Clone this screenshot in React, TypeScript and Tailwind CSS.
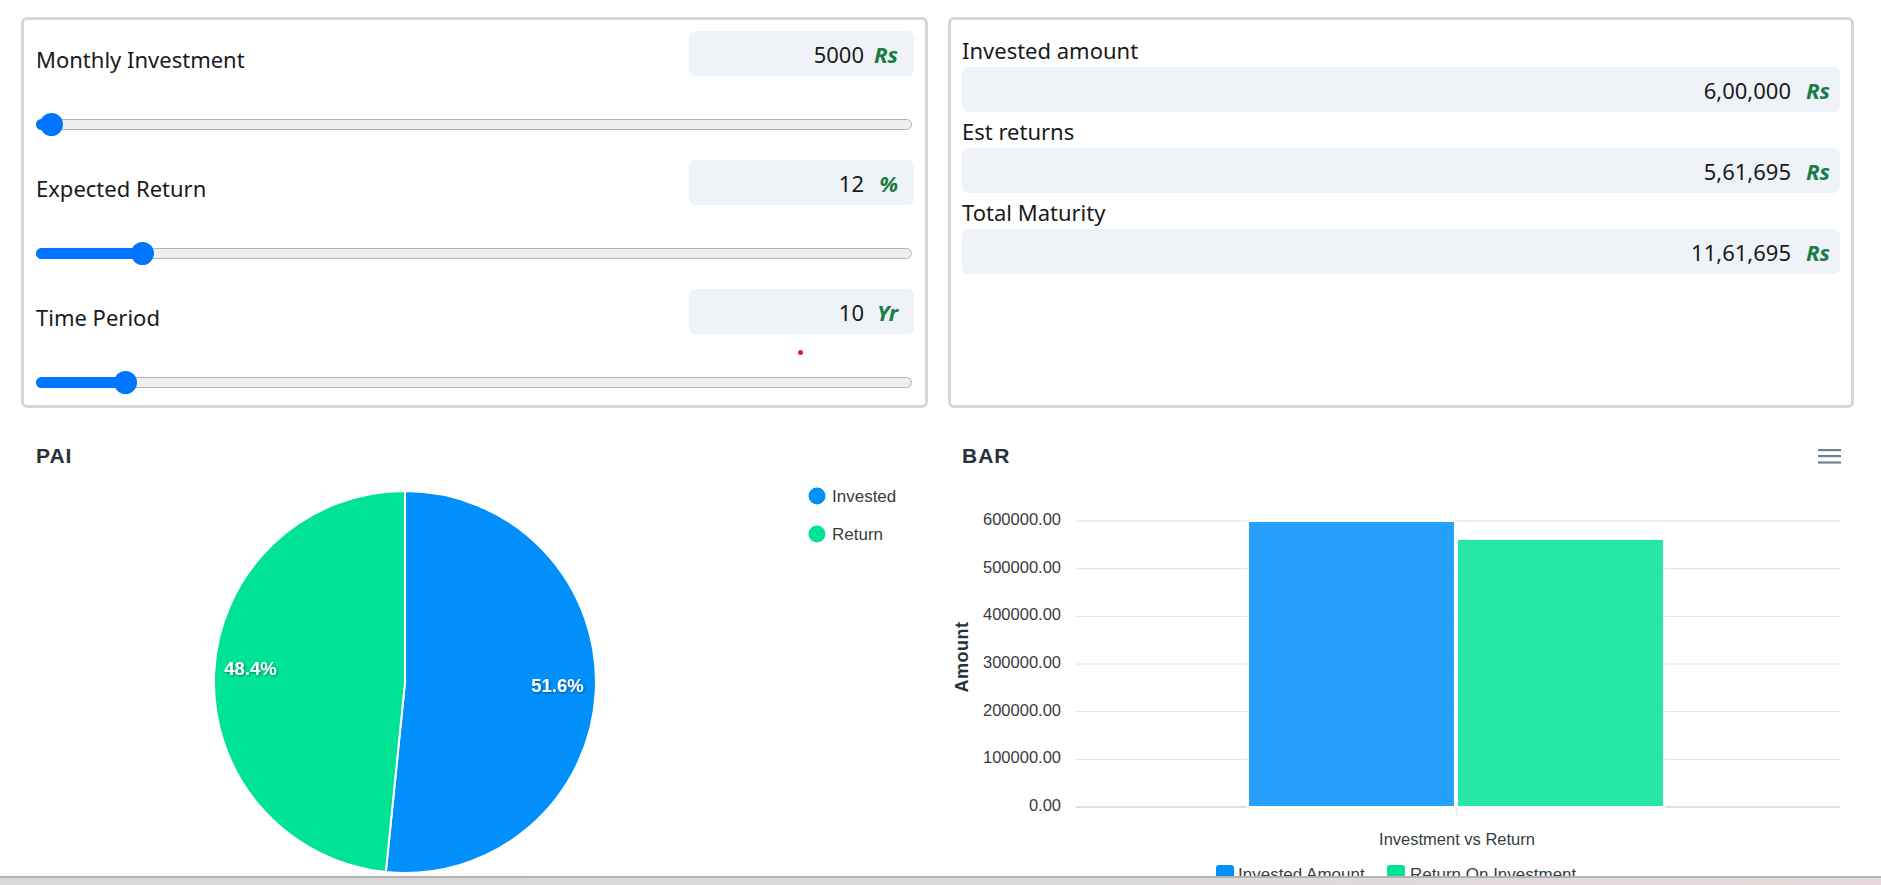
import React from 'react';

const inputs = [
  { label: 'Monthly Investment', value: '5000', unit: 'Rs', fill: 'w-[15px]', thumb: 'left-[4px]' },
  { label: 'Expected Return', value: '12', unit: '%', fill: 'w-[106px]', thumb: 'left-[95px]' },
  { label: 'Time Period', value: '10', unit: 'Yr', fill: 'w-[89px]', thumb: 'left-[78px]' },
];

const results = [
  { label: 'Invested amount', value: '6,00,000' },
  { label: 'Est returns', value: '5,61,695' },
  { label: 'Total Maturity', value: '11,61,695' },
];

const yTicks = ['600000.00', '500000.00', '400000.00', '300000.00', '200000.00', '100000.00', '0.00'];

const Slider = ({ fill, thumb }: { fill: string; thumb: string }) => (
  <div className="relative mt-[37px] h-[22px] w-[876px]">
    <div className="absolute inset-x-0 top-[6px] h-[11px] rounded-full border border-[#b2b2b2] bg-[#efefef]" />
    <div className={`absolute left-0 top-[6px] h-[11px] rounded-l-full bg-[#0075ff] ${fill}`} />
    <div className={`absolute top-0 size-[23px] rounded-full bg-[#0075ff] ${thumb}`} />
  </div>
);

const PieChart = () => {
  // center / radius in svg coords
  const cx = 384;
  const cy = 214;
  const r = 191;
  const ex = 364.83;
  const ey = 404.04;
  return (
    <svg width="907" height="417" className="block" style={{ fontFamily: '"Liberation Sans", Arial, sans-serif' }}>
      <defs>
        <filter id="lblShadow" x="-20%" y="-20%" width="140%" height="140%">
          <feDropShadow dx="1" dy="1" stdDeviation="1" floodColor="#000" floodOpacity="0.45" />
        </filter>
      </defs>
      <path d={`M${cx} ${cy} L${cx} ${cy - r} A${r} ${r} 0 1 1 ${ex} ${ey} Z`} fill="#008ffb" stroke="#fff" strokeWidth="2" />
      <path d={`M${cx} ${cy} L${ex} ${ey} A${r} ${r} 0 0 1 ${cx} ${cy - r} Z`} fill="#00e396" stroke="#fff" strokeWidth="2" />
      <text x="536.5" y="224" textAnchor="middle" fontSize="18.5" fontWeight="bold" fill="#fff" filter="url(#lblShadow)">51.6%</text>
      <text x="229.5" y="207" textAnchor="middle" fontSize="18.5" fontWeight="bold" fill="#fff" filter="url(#lblShadow)">48.4%</text>

      {/* legend */}
      <circle cx="796" cy="28" r="8.5" fill="#008ffb" />
      <text x="811" y="34" fontSize="17" fill="#373d3f">Invested</text>
      <circle cx="796" cy="66" r="8.5" fill="#00e396" />
      <text x="811" y="72" fontSize="17" fill="#373d3f">Return</text>
    </svg>
  );
};

const BarChart = () => {
  const top = 53;
  const step = 47.67;
  return (
    <svg width="906" height="417" className="block" style={{ fontFamily: '"Liberation Sans", Arial, sans-serif' }}>
      {yTicks.map((t, i) => (
        <g key={t}>
          <line x1="128" x2="892" y1={top + i * step} y2={top + i * step} stroke="#e0e0e0" strokeWidth={i === 6 ? 2 : 1} />
          <text x="113" y={top + i * step + 4} textAnchor="end" fontSize="16.5" fill="#373d3f">{t}</text>
        </g>
      ))}
      <line x1="509" x2="509" y1="339" y2="349" stroke="#e0e0e0" />
      <rect x="300" y="53" width="207" height="286" fill="#008ffb" fillOpacity="0.85" stroke="#fff" strokeWidth="2" />
      <rect x="509" y="71" width="207" height="268" fill="#00e396" fillOpacity="0.85" stroke="#fff" strokeWidth="2" />
      <text x="509" y="377" textAnchor="middle" fontSize="16.5" fill="#373d3f">Investment vs Return</text>
      <text x="20" y="189" textAnchor="middle" fontSize="18" fontWeight="900" fill="#263238" letterSpacing="0.5" transform="rotate(-90 20 189)">Amount</text>

      {/* legend */}
      <rect x="268" y="397" width="18" height="18" rx="3" fill="#008ffb" />
      <text x="290" y="412" fontSize="17" fill="#373d3f">Invested Amount</text>
      <rect x="439" y="397" width="18" height="18" rx="3" fill="#00e396" />
      <text x="462" y="412" fontSize="17" fill="#373d3f">Return On Investment</text>
    </svg>
  );
};

const MenuIcon = () => (
  <svg width="23" height="16" viewBox="0 0 23 16">
    <rect x="0" y="1" width="23" height="2.2" fill="#6e8192" />
    <rect x="0" y="7" width="23" height="2.2" fill="#6e8192" />
    <rect x="0" y="13.4" width="23" height="2.2" fill="#6e8192" />
  </svg>
);

export default function App() {
  return (
    <div className="relative h-[885px] w-[1881px] overflow-hidden bg-white text-[#1a1a1a]" style={{ fontFamily: '"Noto Sans", "Open Sans", sans-serif' }}>
      {/* Calculator cards */}
      <div className="flex gap-[20px] pl-[21px] pt-[17px]">
        <div className="relative h-[391px] w-[907px] rounded-[6px] border-[3px] border-[#d3d6dc] pl-[12px] pr-[11px] pt-[11px]">
          {inputs.map((item) => (
            <div key={item.label} className="h-[129px]">
              <div className="flex items-start justify-between">
                <span className="mt-[13px] text-[22px] leading-[30px]">{item.label}</span>
                <div className="flex h-[45px] w-[225px] items-center justify-end rounded-[6px] bg-[#eff3f8] pr-[16px] text-[22px] leading-[30px]">
                  <span>{item.value}</span>
                  <span className="w-[34px] text-right font-bold italic text-[#1b7d43]">{item.unit}</span>
                </div>
              </div>
              <Slider fill={item.fill} thumb={item.thumb} />
            </div>
          ))}
          <div className="absolute left-[774px] top-[330px] size-[5px] rounded-full bg-[#e31b1b]" />
        </div>

        <div className="h-[391px] w-[906px] rounded-[6px] border-[3px] border-[#d3d6dc] px-[11px] pt-[11px]">
          {results.map((item) => (
            <div key={item.label}>
              <div className="h-[36px] pt-[4px] text-[22px] leading-[30px]">{item.label}</div>
              <div className="flex h-[45px] items-center justify-end rounded-[6px] bg-[#eff3f8] pr-[10px] text-[22px] leading-[30px]">
                <span>{item.value}</span>
                <span className="w-[39px] text-right font-bold italic text-[#1b7d43]">Rs</span>
              </div>
            </div>
          ))}
        </div>
      </div>

      {/* Charts */}
      <div className="flex gap-[20px] pl-[21px]">
        <div className="w-[907px] pt-[36px]">
          <div className="h-[24px] pl-[15px] text-[21px] font-black leading-[24px] tracking-[1px] text-[#263238]" style={{ fontFamily: '"Liberation Sans", Arial, sans-serif' }}>
            PAI
          </div>
          <PieChart />
        </div>
        <div className="w-[906px] pt-[36px]">
          <div className="flex h-[24px] items-center justify-between pl-[14px] pr-[13px]">
            <span className="text-[21px] font-black leading-[24px] tracking-[1px] text-[#263238]" style={{ fontFamily: '"Liberation Sans", Arial, sans-serif' }}>
              BAR
            </span>
            <MenuIcon />
          </div>
          <BarChart />
        </div>
      </div>

      {/* browser bottom strip */}
      <div className="absolute inset-x-0 bottom-0 h-[9px] border-t-2 border-[#b3b3b3] bg-gradient-to-r from-[#d9d9d9] via-[#dadada] to-[#e6d8da]" />
    </div>
  );
}
